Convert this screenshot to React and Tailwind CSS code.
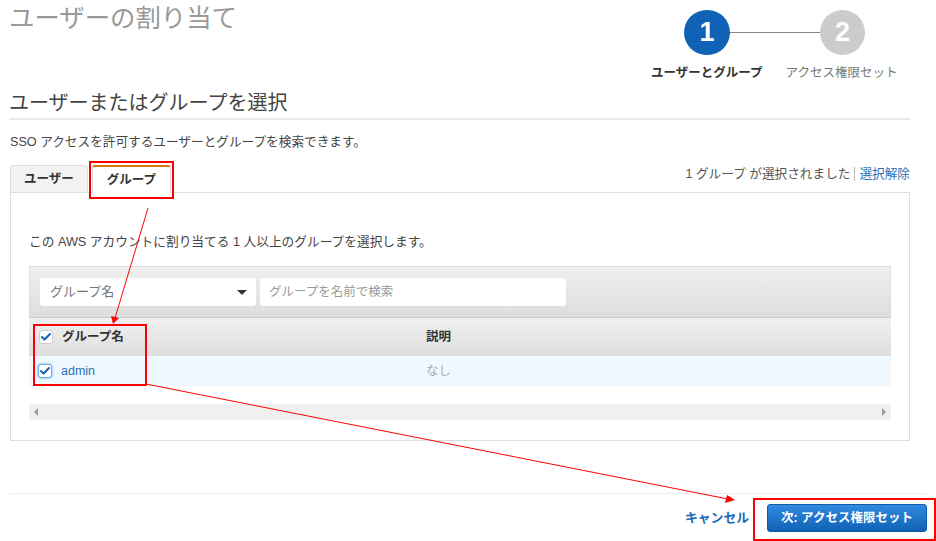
import { Check } from "lucide-react";

function Box({ focus }) {
  return (
    <span
      className={
        "flex h-[14px] w-[14px] items-center justify-center rounded-[3px] border bg-white " +
        (focus ? "border-[#6aa9e9] shadow-[0_0_3px_#6aa9e9]" : "border-[#ccc]")
      }
    >
      <Check size={12} strokeWidth={4} className="text-[#0f62b6]" />
    </span>
  );
}

// red boxes and arrows drawn on top of the screenshot
function Notes() {
  return (
    <>
      <div className="absolute left-[89px] top-[161px] h-[38px] w-[85px] border-2 border-[#f00]" />
      <div className="absolute left-[33px] top-[324px] h-[62px] w-[114px] border-2 border-[#f00]" />
      <div className="absolute left-[753px] top-[498px] h-[43px] w-[183px] border-2 border-[#f00]" />
      <svg className="pointer-events-none absolute left-0 top-0" width="936" height="541">
        <line x1="148" y1="208" x2="115" y2="318" stroke="#f00" strokeWidth="1" />
        <polygon points="113,324 111,316 119,318" fill="#f00" />
        <line x1="146" y1="384" x2="728" y2="499" stroke="#f00" strokeWidth="1" />
        <polygon points="735,500 727,495 725,503" fill="#f00" />
      </svg>
    </>
  );
}

export default function App() {
  return (
    <div className="relative h-[541px] w-[936px] overflow-hidden bg-white font-['Liberation_Sans','Noto_Sans_CJK_JP',sans-serif] text-[12.5px] text-[#444]">
      <div className="pl-[9px] pr-[26px]">
        <div className="flex h-[118px] justify-between">
          <div className="flex flex-col justify-between">
            <h1 className="pt-[1px] text-[25.4px] leading-[34px] text-[#999]">ユーザーの割り当て</h1>
            <h2 className="h-[28px] text-[20px] leading-[26px] text-[#444]">ユーザーまたはグループを選択</h2>
          </div>
          <div className="flex w-[260px] flex-col pt-[10px]">
            <div className="flex items-center pl-[34px]">
              <span className="flex h-[45px] w-[46px] items-center justify-center rounded-full bg-[#0f62b6] text-[27px] font-bold text-white">1</span>
              <span className="h-[1px] w-[90px] bg-[#888]" />
              <span className="flex h-[45px] w-[45px] items-center justify-center rounded-full bg-[#ccc] text-[27px] font-bold text-white">2</span>
            </div>
            <div className="ml-[1px] mt-[9px] flex gap-[23px] leading-[18px]">
              <span className="font-bold text-[#333]">ユーザーとグループ</span>
              <span className="text-[#777]">アクセス権限セット</span>
            </div>
          </div>
        </div>

        <div className="border-t-2 border-[#e8e8e8]" />
        <p className="mt-[13px] pl-[1px] text-[12.65px] leading-[18px]">SSO アクセスを許可するユーザーとグループを検索できます。</p>

        <div className="mt-[14px] flex h-[27px] justify-between pl-[1px]">
          <div className="flex gap-[4px]">
            <div className="flex h-[27px] w-[78px] items-center justify-center rounded-t-[3px] border border-b-0 border-[#ddd] bg-[#f2f2f2] font-bold text-[#333]">ユーザー</div>
            <div className="z-10 flex h-[28px] w-[79px] items-center justify-center rounded-t-[3px] border border-b-0 border-t-2 border-[#ddd] border-t-[#dd7a0c] bg-white font-bold text-[#333]">グループ</div>
          </div>
          <div className="flex h-[18px] items-center text-[12.65px] text-[#555]">
            1 グループ が選択されました
            <span className="mx-[4px] h-[14px] w-[1px] bg-[#bbb]" />
            <a className="text-[#2a6fb8]">選択解除</a>
          </div>
        </div>

        <div className="ml-[1px] h-[249px] border border-[#ddd] px-[18px]">
          <p className="pt-[40px] text-[12.7px] leading-[18px]">この AWS アカウントに割り当てる 1 人以上のグループを選択します。</p>
          <div className="mt-[15px] w-[862px]">
            <div className="flex h-[52px] items-center gap-[4px] border border-[#ddd] border-b-[#ccc] bg-gradient-to-b from-[#efefef] to-[#ddd] pl-[10px]">
              <div className="flex h-[28px] w-[216px] items-center justify-between rounded-[3px] bg-white pl-[10px] pr-[9px] text-[13px] text-[#777]">
                グループ名
                <span className="h-0 w-0 border-x-[5px] border-t-[5px] border-x-transparent border-t-[#333]" />
              </div>
              <div className="flex h-[28px] w-[306px] items-center rounded-[3px] bg-white pl-[9px] text-[#999]">グループを名前で検索</div>
            </div>
            <div className="flex h-[38px] items-center bg-gradient-to-b from-[#f0f0f0] to-[#dedede] font-bold text-[#333]">
              <div className="flex w-[397px] items-center pl-[10px]">
                <Box />
                <span className="ml-[9px]">グループ名</span>
              </div>
              <span>説明</span>
            </div>
            <div className="flex h-[30px] items-center bg-[#f0f8ff]">
              <div className="flex w-[397px] items-center pl-[9px]">
                <Box focus />
                <a className="ml-[9px] text-[#2a6fb8]">admin</a>
              </div>
              <span className="text-[#aaa]">なし</span>
            </div>
            <div className="mt-[18px] flex h-[16px] items-center justify-between bg-[#f0f0f0] px-[5px]">
              <span className="h-0 w-0 border-y-[4px] border-r-[4px] border-y-transparent border-r-[#999]" />
              <span className="h-0 w-0 border-y-[4px] border-l-[4px] border-y-transparent border-l-[#999]" />
            </div>
          </div>
        </div>
      </div>

      <div className="ml-[9px] mt-[52px] flex h-[48px] w-[918px] items-center justify-end gap-[18px] border-t border-[#eee] pt-[1px]">
        <a className="text-[12.8px] font-bold text-[#1a68b8]">キャンセル</a>
        <button className="h-[28px] w-[160px] rounded-[3px] border border-[#0f5ca8] bg-gradient-to-b from-[#2f8ae0] to-[#0f62b6] text-[12.5px] font-bold text-white">次: アクセス権限セット</button>
      </div>

      <Notes />
    </div>
  );
}
